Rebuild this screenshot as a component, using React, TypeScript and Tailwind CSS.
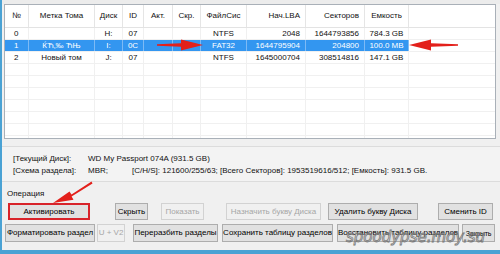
import React from "react";

const cols = "grid-cols-[24px_66px_28px_21px_29px_28px_46px_59px_59px_44px_1fr]";

type Row = { c: string[]; sel?: boolean };
const rows: Row[] = [
  { c: ["0", "", "H:", "07", "", "", "NTFS", "2048", "1644793856", "784.3 GB"] },
  { c: ["1", "ЌЋ‚‰ ЋЊ", "I:", "0C", "", "", "FAT32", "1644795904", "204800", "100.0 MB"], sel: true },
  { c: ["2", "Новый том", "J:", "07", "", "", "NTFS", "1645000704", "308514816", "147.1 GB"] },
];

const headers = ["№", "Метка Тома", "Диск", "ID", "Акт.", "Скр.", "ФайлСис", "Нач.LBA", "Секторов", "Емкость", ""];
const align = [
  "justify-start pl-[7px]",
  "justify-center",
  "justify-center",
  "justify-center",
  "justify-center",
  "justify-center",
  "justify-center",
  "justify-end pr-[5px]",
  "justify-end pr-[5px]",
  "justify-center",
  "justify-center",
];
const dataAlign = [
  "justify-start pl-[9px]",
  "justify-center",
  "justify-center",
  "justify-center",
  "justify-center",
  "justify-center",
  "justify-center",
  "justify-end pr-[5px]",
  "justify-end pr-[5px]",
  "justify-center",
  "justify-center",
];

function Btn({ children, w, ml, disabled, red, h = "h-[17px]", small }: { children: React.ReactNode; w: string; ml: string; disabled?: boolean; red?: boolean; h?: string; small?: boolean }) {
  const base = `${w} ${ml} ${h} shrink-0 flex items-center justify-center whitespace-nowrap ${small ? "text-[7px] tracking-[-0.2px]" : "text-[8px]"} leading-none overflow-hidden`;
  if (red)
    return <div className={`${base} border-2 border-[#d8232a] bg-[#e1e1e1] text-black`}>{children}</div>;
  if (disabled)
    return <div className={`${base} border border-[#d2d2d2] bg-[#f0f0f0] text-[#a6a6a6]`}>{children}</div>;
  return <div className={`${base} border border-[#adadad] bg-[#e1e1e1] text-black`}>{children}</div>;
}

export default function App() {
  const emptyRows = 6;
  return (
    <div
      className="relative w-[500px] h-[254px] overflow-hidden bg-[#f0f0f0] border-l-2 border-b-4 border-[#4aa2d4] flex flex-col text-[#111]"
      style={{ fontFamily: '"Liberation Sans", Arial, sans-serif' }}
    >
      <div className="h-[4px] shrink-0 bg-[#ececec]" />
      {/* table */}
      <div className="ml-[2px] mr-[4px] h-[135px] shrink-0 border border-[#a9b0b8] bg-white flex flex-col">
        <div className={`grid ${cols} h-[23px] border-b border-[#e3e3e3]`}>
          {headers.map((h, i) => (
            <div key={i} className={`flex items-center ${align[i]} text-[8px] border-r border-[#e5e5e5] ${i === 10 ? "border-r-0" : ""}`}>
              {h}
            </div>
          ))}
        </div>
        {rows.map((r, ri) => (
          <div key={ri} className={`grid ${cols} h-[12px] border-b border-[#f0f0f0]`}>
            {[...r.c, ""].map((v, i) => {
              const sel = r.sel && i < 10;
              return (
                <div
                  key={i}
                  className={`flex items-center ${dataAlign[i]} text-[8px] leading-none whitespace-nowrap ${i === 10 ? "" : "border-r"} ${sel ? "bg-[#3396f0] text-white border-[#7dbaf5]" : "border-[#f0f0f0]"}`}
                >
                  {v}
                </div>
              );
            })}
          </div>
        ))}
        {Array.from({ length: emptyRows }).map((_, ri) => (
          <div key={ri} className={`grid ${cols} h-[12px] border-b border-[#f0f0f0]`}>
            {headers.map((_, i) => (
              <div key={i} className={`${i === 10 ? "" : "border-r"} border-[#f0f0f0]`} />
            ))}
          </div>
        ))}
        <div className={`grid ${cols} flex-1`}>
          {headers.map((_, i) => (
            <div key={i} className={`${i === 10 ? "" : "border-r"} border-[#f0f0f0]`} />
          ))}
        </div>
      </div>

      {/* info */}
      <div className="mt-[7px] h-[36px] shrink-0 border-y border-[#dcdcdc] bg-[#f3f3f3] flex flex-col justify-center gap-[3px] text-[8px] leading-[9px]">
        <div className="flex">
          <span className="ml-[11px] w-[75px]">[Текущий Диск]:</span>
          <span>WD My Passport 074A (931.5 GB)</span>
        </div>
        <div className="flex">
          <span className="ml-[11px] w-[75px]">[Схема раздела]:</span>
          <span className="w-[44px]">MBR;</span>
          <span>[C/H/S]: 121600/255/63; [Всего Секторов]: 1953519616/512; [Емкость]: 931.5 GB.</span>
        </div>
      </div>

      <div className="mt-[7px] ml-[5px] text-[8px] leading-[9px]">Операция</div>

      <div className="mt-[5px] flex">
        <Btn w="w-[82px]" ml="ml-[6px]" red>Активировать</Btn>
        <Btn w="w-[33px]" ml="ml-[25px]">Скрыть</Btn>
        <Btn w="w-[43px]" ml="ml-[13px]" disabled>Показать</Btn>
        <Btn w="w-[95px]" ml="ml-[22px]" disabled>Назначить букву Диска</Btn>
        <Btn w="w-[90px]" ml="ml-[7px]">Удалить букву Диска</Btn>
        <Btn w="w-[55px]" ml="ml-[20px]">Сменить ID</Btn>
      </div>
      <div className="mt-[4px] flex">
        <Btn h="h-[18px]" w="w-[90px]" ml="ml-[3px]">Форматировать раздел</Btn>
        <Btn h="h-[18px]" w="w-[28px]" ml="ml-[2px]" disabled>U + V2</Btn>
        <Btn h="h-[18px]" w="w-[85px]" ml="ml-[8px]">Переразбить разделы</Btn>
        <Btn h="h-[18px]" w="w-[111px]" ml="ml-[4px]">Сохранить таблицу разделов</Btn>
        <Btn h="h-[18px]" w="w-[122px]" ml="ml-[4px]">Восстановить таблицу разделов</Btn>
        <Btn h="h-[18px]" w="w-[33px]" ml="ml-[3px]" small>Закрыть</Btn>
      </div>

      {/* watermark */}
      <div
        className="absolute left-[344px] top-[226px] text-[15px] italic text-transparent whitespace-nowrap pointer-events-none [-webkit-text-stroke:0.8px_#7a7a7a]"
        style={{ fontFamily: '"DejaVu Sans", sans-serif' }}
      >
        spoodypse.moy.su
      </div>

      {/* arrows */}
      <svg className="absolute left-[-2px] top-0 pointer-events-none" width="500" height="254" viewBox="0 0 500 254">
        <g fill="#e3201b">
          <path d="M157 44.2 L181 43.2 L181 39.5 L203 45 L181 50.5 L181 46.8 L157 45.8 Z" />
          <path d="M458 44.2 L431 43.2 L431 39.5 L409 45 L431 50.5 L431 46.8 L458 45.8 Z" />
          <path d="M91.5 181.6 L71.5 194.6 L69.5 191.5 L53 203 L73.5 199.8 L71.6 196.6 L92.5 183.4 Z" />
        </g>
      </svg>
    </div>
  );
}
